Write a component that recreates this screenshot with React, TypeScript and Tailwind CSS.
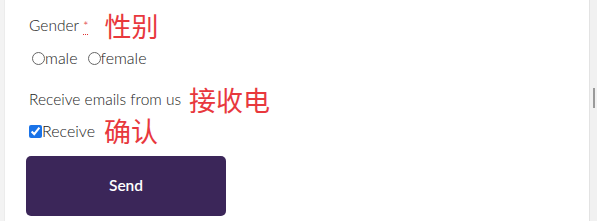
export default function App() {
  return (
    <div className="flex h-[221px] w-[597px] overflow-hidden bg-white font-['Lato','Liberation_Sans',sans-serif] font-light text-[#222]">
      <div className="w-[5px] shrink-0 bg-[#f3f3f3] border-r border-[#ececec]" />
      <form className="flex flex-1 flex-col pl-[24px] pt-[10px]">
        <div className="flex h-[32px] items-center">
          <span className="text-[15.5px]">
            Gender{" "}
            <abbr className="text-[#e03131] no-underline border-b border-dotted border-[#e03131] text-[13px]" title="required">
              *
            </abbr>
          </span>
          <span className="ml-[16px] font-['Noto_Sans_CJK_SC',sans-serif] font-normal text-[27px] leading-[32px] text-[#e8383d]">性别</span>
        </div>
        <div className="mt-[6px] flex items-center gap-[10px] pl-[3px] text-[16px] leading-[20px]">
          <label className="flex items-center">
            <span className="h-[13px] w-[13px] rounded-full border border-[#666]" />
            male
          </label>
          <label className="flex items-center">
            <span className="h-[13px] w-[13px] rounded-full border border-[#666]" />
            female
          </label>
        </div>
        <div className="mt-[16px] flex h-[32px] items-center">
          <span className="text-[15.5px]">Receive emails from us</span>
          <span className="ml-[8px] font-['Noto_Sans_CJK_SC',sans-serif] font-normal text-[27px] leading-[32px] text-[#e8383d]">接收电</span>
        </div>
        <div className="flex h-[30px] items-center">
          <label className="flex items-center text-[16px]">
            <input type="checkbox" defaultChecked className="m-0 h-[13px] w-[13px] accent-[#1a73e8]" />
            Receive
          </label>
          <span className="ml-[9px] font-['Noto_Sans_CJK_SC',sans-serif] font-normal text-[27px] leading-[30px] text-[#e8383d]">确认</span>
        </div>
        <button
          type="button"
          className="mt-[10px] -ml-[3px] h-[60px] w-[200px] rounded-[5px] bg-[#3b2659] text-[15.5px] font-semibold text-white"
        >
          Send
        </button>
      </form>
      <div className="relative w-[8px] shrink-0 border-l border-[#e3e3e3] bg-[#f1f1f1]">
        <div className="absolute left-[3px] top-[88px] h-[20px] w-[2px] bg-[#9a9a9a]" />
      </div>
    </div>
  );
}
